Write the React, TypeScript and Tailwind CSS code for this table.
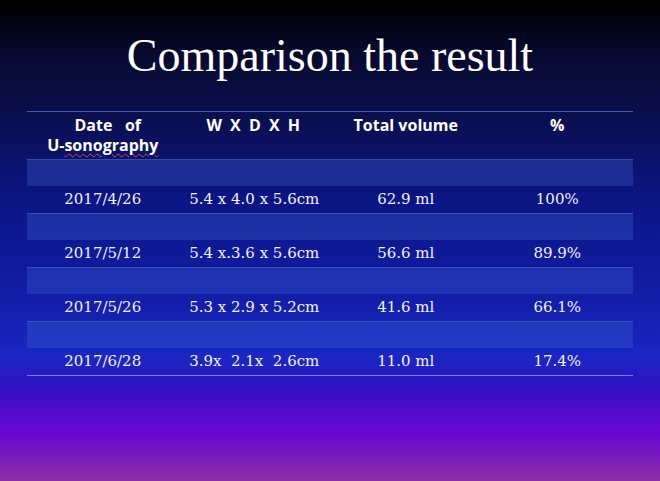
const rows = [
  { date: "2017/4/26", size: "5.4 x 4.0 x 5.6cm", volume: "62.9 ml", pct: "100%" },
  { date: "2017/5/12", size: "5.4 x.3.6 x 5.6cm", volume: "56.6 ml", pct: "89.9%" },
  { date: "2017/5/26", size: "5.3 x 2.9 x 5.2cm", volume: "41.6 ml", pct: "66.1%" },
  { date: "2017/6/28", size: "3.9x  2.1x  2.6cm", volume: "11.0 ml", pct: "17.4%" },
]

export default function App() {
  return (
    <div className="w-full h-[481px] overflow-hidden bg-[linear-gradient(to_bottom,#000000_0%,#070a30_12%,#0a0f4e_24%,#0c1585_42%,#121ea8_62%,#1a27c2_74%,#3312c6_81%,#6a06d2_90%,#8a30a4_100%)]">
      <h1 className="pt-[30px] h-[111px] text-center text-white text-[46px] leading-[52px] font-['Liberation_Serif',serif]">
        Comparison the result
      </h1>

      <div className="mx-[27px] border-t border-[#3d5bb8] border-b border-b-[#6b84e6]">
        {/* header */}
        <div className="grid grid-cols-4 h-[47px] pt-[3px] text-white text-[16px] leading-[20px] font-bold font-['Open_Sans',sans-serif] text-center">
          <div>
            <div className="pl-[10px]">Date&nbsp;&nbsp; of</div>
            <div>
              U-<span className="underline decoration-wavy decoration-[#d24a4a] decoration-1 underline-offset-2">sonography</span>
            </div>
          </div>
          <div className="tracking-[2px]">W X D X H</div>
          <div>Total volume</div>
          <div>%</div>
        </div>

        {rows.map((r, i) => (
          <div key={i}>
            <div className="h-[27px] bg-[#3a5fd0]/35 border-t border-[#3d5bb8]/70" />
            <div className="grid grid-cols-4 h-[27px] items-center text-center text-[#f2f2ff] text-[15px] font-['DejaVu_Serif',serif] whitespace-pre">
              <div>{r.date}</div>
              <div>{r.size}</div>
              <div>{r.volume}</div>
              <div>{r.pct}</div>
            </div>
          </div>
        ))}
      </div>
    </div>
  )
}
